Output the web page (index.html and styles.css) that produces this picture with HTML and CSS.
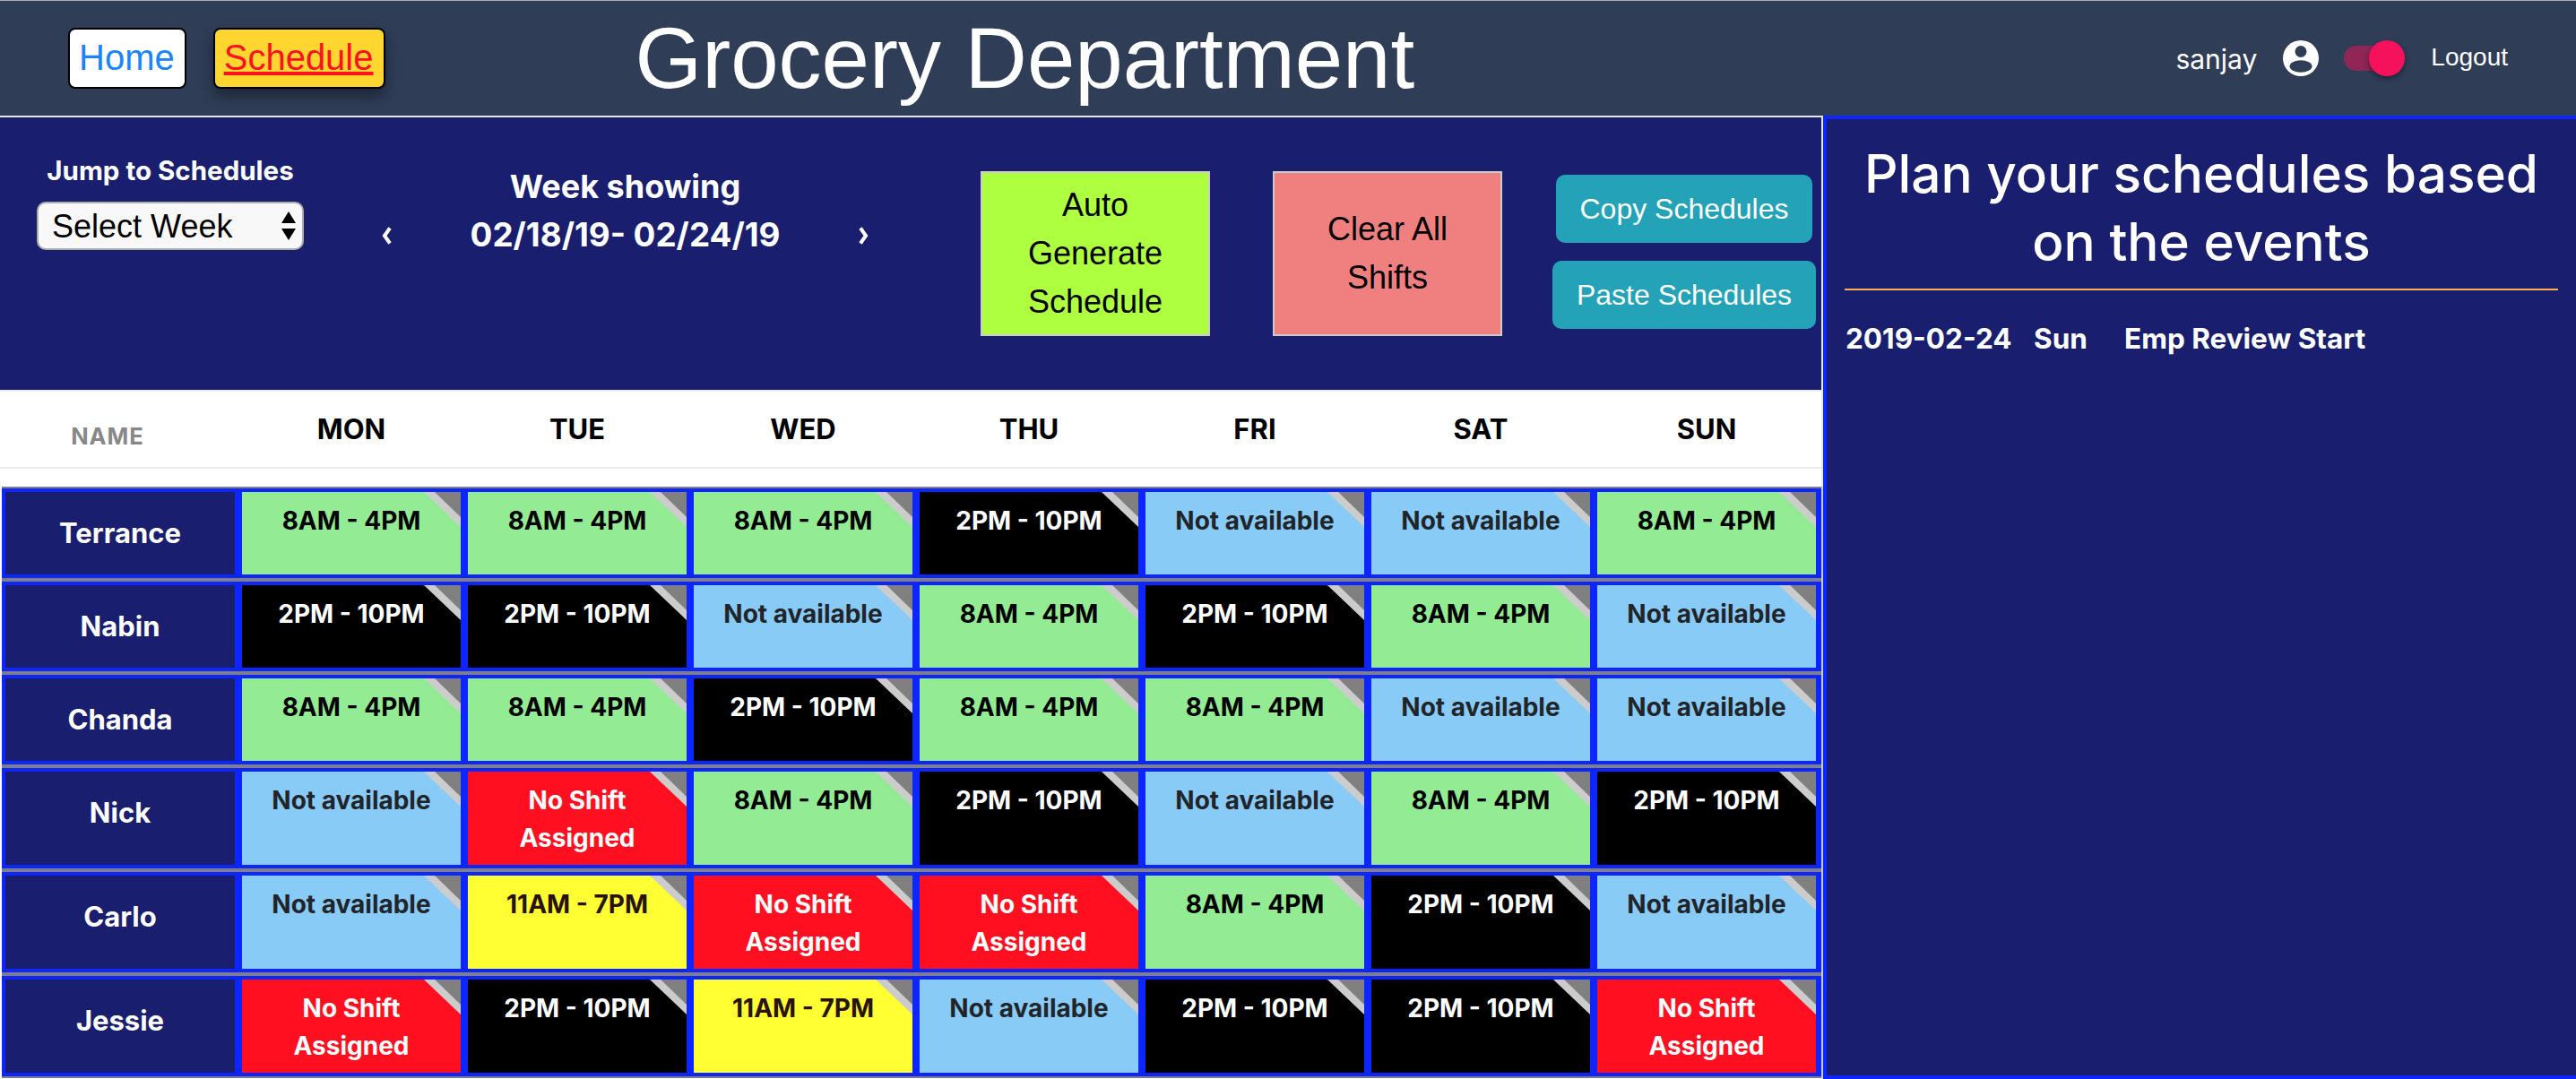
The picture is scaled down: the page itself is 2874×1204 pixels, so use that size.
FILE: index.html
```html
<!DOCTYPE html>
<html lang="en">
<head>
<meta charset="utf-8">
<title>Grocery Department</title>
<link rel="stylesheet" href="styles.css">
</head>
<body>
<header class="topbar">
  <nav class="nav">
    <a class="nav-btn nav-home">Home</a>
    <a class="nav-btn nav-active">Schedule</a>
  </nav>
  <h1 class="title">Grocery Department</h1>
  <div class="user">
    <span class="user-name">sanjay</span>
    <svg class="user-icon" viewBox="0 0 40 40"><circle cx="20" cy="20" r="20" fill="#fff"/><circle cx="20" cy="12.5" r="6.5" fill="#2f3d57"/><ellipse cx="20" cy="29" rx="12.5" ry="6.8" fill="#2f3d57"/></svg>
    <span class="switch"><span class="switch-track"></span><span class="switch-knob"></span></span>
    <span class="logout">Logout</span>
  </div>
</header>
<main class="main">
  <section class="schedule">
    <div class="toolbar">
      <div class="jump">
        <label class="jump-label" for="week">Jump to Schedules</label>
        <span class="select-wrap"><select id="week" class="select"><option>Select Week</option></select></span>
      </div>
      <div class="week">
        <div class="week-label">Week showing</div>
        <div class="week-range">
          <svg class="chev" viewBox="0 0 16 20"><path d="M11 1.500 5 10l6 8.500" fill="none" stroke="#fff" stroke-width="4"/></svg>
          <span>02/18/19- 02/24/19</span>
          <svg class="chev" viewBox="0 0 16 20"><path d="M5 1.500 11 10l-6 8.500" fill="none" stroke="#fff" stroke-width="4"/></svg>
        </div>
      </div>
      <button class="big-btn big-auto">Auto<br>Generate<br>Schedule</button>
      <button class="big-btn big-clear">Clear All<br>Shifts</button>
      <div class="actions">
        <button class="info-btn info-copy">Copy Schedules</button>
        <button class="info-btn info-paste">Paste Schedules</button>
      </div>
    </div>
    <div class="days">
      <div class="day-name">NAME</div>
      <div class="day">MON</div><div class="day">TUE</div><div class="day">WED</div><div class="day">THU</div><div class="day">FRI</div><div class="day">SAT</div><div class="day">SUN</div>
    </div>
    <div class="rows">
      <div class="row">
        <div class="name">Terrance</div>
        <div class="cell am">8AM - 4PM<i class="fold"></i></div>
        <div class="cell am">8AM - 4PM<i class="fold"></i></div>
        <div class="cell am">8AM - 4PM<i class="fold"></i></div>
        <div class="cell pm">2PM - 10PM<i class="fold"></i></div>
        <div class="cell na">Not available<i class="fold"></i></div>
        <div class="cell na">Not available<i class="fold"></i></div>
        <div class="cell am">8AM - 4PM<i class="fold"></i></div>
      </div>
      <div class="row">
        <div class="name">Nabin</div>
        <div class="cell pm">2PM - 10PM<i class="fold"></i></div>
        <div class="cell pm">2PM - 10PM<i class="fold"></i></div>
        <div class="cell na">Not available<i class="fold"></i></div>
        <div class="cell am">8AM - 4PM<i class="fold"></i></div>
        <div class="cell pm">2PM - 10PM<i class="fold"></i></div>
        <div class="cell am">8AM - 4PM<i class="fold"></i></div>
        <div class="cell na">Not available<i class="fold"></i></div>
      </div>
      <div class="row">
        <div class="name">Chanda</div>
        <div class="cell am">8AM - 4PM<i class="fold"></i></div>
        <div class="cell am">8AM - 4PM<i class="fold"></i></div>
        <div class="cell pm">2PM - 10PM<i class="fold"></i></div>
        <div class="cell am">8AM - 4PM<i class="fold"></i></div>
        <div class="cell am">8AM - 4PM<i class="fold"></i></div>
        <div class="cell na">Not available<i class="fold"></i></div>
        <div class="cell na">Not available<i class="fold"></i></div>
      </div>
      <div class="row">
        <div class="name">Nick</div>
        <div class="cell na">Not available<i class="fold"></i></div>
        <div class="cell none">No Shift<br>Assigned<i class="fold"></i></div>
        <div class="cell am">8AM - 4PM<i class="fold"></i></div>
        <div class="cell pm">2PM - 10PM<i class="fold"></i></div>
        <div class="cell na">Not available<i class="fold"></i></div>
        <div class="cell am">8AM - 4PM<i class="fold"></i></div>
        <div class="cell pm">2PM - 10PM<i class="fold"></i></div>
      </div>
      <div class="row">
        <div class="name">Carlo</div>
        <div class="cell na">Not available<i class="fold"></i></div>
        <div class="cell mid">11AM - 7PM<i class="fold"></i></div>
        <div class="cell none">No Shift<br>Assigned<i class="fold"></i></div>
        <div class="cell none">No Shift<br>Assigned<i class="fold"></i></div>
        <div class="cell am">8AM - 4PM<i class="fold"></i></div>
        <div class="cell pm">2PM - 10PM<i class="fold"></i></div>
        <div class="cell na">Not available<i class="fold"></i></div>
      </div>
      <div class="row">
        <div class="name">Jessie</div>
        <div class="cell none">No Shift<br>Assigned<i class="fold"></i></div>
        <div class="cell pm">2PM - 10PM<i class="fold"></i></div>
        <div class="cell mid">11AM - 7PM<i class="fold"></i></div>
        <div class="cell na">Not available<i class="fold"></i></div>
        <div class="cell pm">2PM - 10PM<i class="fold"></i></div>
        <div class="cell pm">2PM - 10PM<i class="fold"></i></div>
        <div class="cell none">No Shift<br>Assigned<i class="fold"></i></div>
      </div>
    </div>
  </section>
  <aside class="events">
    <h2 class="events-title">Plan your schedules based on the events</h2>
    <hr class="events-rule">
    <div class="event">
      <span class="event-date">2019-02-24</span>
      <span class="event-day">Sun</span>
      <span class="event-name">Emp Review Start</span>
    </div>
  </aside>
</main>
</body>
</html>
```
FILE: styles.css
```css
* { box-sizing: border-box; }
html, body { margin: 0; padding: 0; height: 1204px; overflow: hidden; background: #fff; }
body { font-family: "Inter", "Liberation Sans", sans-serif; color: #fff; }

.topbar {
  height: 129px;
  border-top: 1px solid #b0b0b0;
  background: #2f3d57;
  display: flex;
  align-items: flex-start;
  padding: 30px 76px 0;
}
.nav { display: flex; gap: 30px; }
.nav-btn {
  display: flex;
  align-items: center;
  height: 68px;
  padding: 0 11px 3px 10px;
  border: 2px solid #000;
  border-radius: 8px;
  font: 40px/1 "Liberation Sans", sans-serif;
}
.nav-home { background: #fff; color: #1a84ff; }
.nav-active {
  background: #ffd530;
  color: #ff1020;
  text-decoration: underline;
  box-shadow: 0 8px 16px rgba(0, 0, 0, .4);
}
.title {
  margin: -21px 0 0 279px;
  font: 400 96px/110px "Liberation Sans", sans-serif;
  white-space: nowrap;
}
.user { margin-left: auto; display: flex; align-items: center; height: 68px; margin-top: -1px; }
.user-name { font-size: 30px; line-height: 40px; margin-top: 4px; }
.user-icon { width: 40px; height: 40px; margin-left: 29px; margin-top: 2px; }
.switch { position: relative; width: 68px; height: 40px; margin-left: 28px; margin-top: 2px; }
.switch-track {
  position: absolute; left: 0; top: 6px; width: 56px; height: 28px;
  border-radius: 14px; background: #8f2655;
}
.switch-knob {
  position: absolute; right: 0; top: 0; width: 40px; height: 40px;
  border-radius: 50%; background: #f5115c;
  box-shadow: 0 3px 6px rgba(0, 0, 0, .4);
}
.logout { font: 28px/40px "Liberation Sans", sans-serif; margin-left: 29px; }

.main { display: flex; height: 1075px; }
.schedule {
  width: 2034px;
  flex: none;
  border-top: 2px solid #e6e6e6;
  border-right: 2px solid #e6e6e6;
  background: #fff;
}
.toolbar {
  height: 304px;
  background: #191e6e;
  display: flex;
  align-items: flex-start;
  padding-left: 41px;
}
.jump { width: 298px; margin-top: 42px; display: flex; flex-direction: column; align-items: center; }
.jump-label { font-size: 29.500px; line-height: 34px; font-weight: 700; margin-bottom: 18px; white-space: nowrap; }
.select-wrap { position: relative; display: block; width: 298px; height: 54px; }
.select-wrap::before, .select-wrap::after {
  content: "";
  position: absolute;
  right: 9px;
  border-left: 8.500px solid transparent;
  border-right: 8.500px solid transparent;
}
.select-wrap::before { top: 11px; border-bottom: 13px solid #000; }
.select-wrap::after { top: 30px; border-top: 13px solid #000; }
.select {
  appearance: none;
  width: 100%;
  height: 100%;
  padding: 0 0 0 15px;
  border: 2px solid #adadad;
  border-radius: 10px;
  background: #f8f8f8;
  color: #000;
  font: 36px "Liberation Sans", sans-serif;
}
.week { width: 547px; margin: 50px 0 0 85px; text-align: center; font-weight: 700; }
.week-label { font-size: 36px; line-height: 54px; }
.week-range { display: flex; justify-content: space-between; align-items: center; font-size: 36.800px; line-height: 54px; }
.chev { width: 16px; height: 20px; flex: none; margin-top: 2px; }
.big-btn {
  width: 256px;
  height: 184px;
  flex: none;
  margin-top: 60px;
  padding: 0;
  border: 2px solid #ccc;
  color: #000;
  font: 36px/54px "Liberation Sans", sans-serif;
}
.big-auto { margin-left: 123px; background: #adff40; }
.big-clear { margin-left: 70px; background: #f08080; }
.actions { width: 294px; margin: 64px 0 0 56px; display: flex; flex-direction: column; align-items: center; gap: 20px; }
.info-btn {
  height: 76px;
  border: 0;
  border-radius: 10px;
  background: #24a3b8;
  color: #fff;
  font: 32px "Liberation Sans", sans-serif;
}
.info-copy { width: 286px; }
.info-paste { width: 294px; }

.days {
  height: 88px;
  border-top: 2px solid #ededed;
  border-bottom: 2px solid #ededed;
  display: grid;
  grid-template-columns: 256px repeat(7, 244px);
  column-gap: 8px;
  padding-left: 6px;
  align-items: center;
  color: #000;
  text-align: center;
}
.day { font-size: 31px; font-weight: 700; padding-bottom: 2px; }
.day-name { font-size: 25.500px; font-weight: 700; letter-spacing: 1px; color: #888; padding: 14px 28px 0 0; }

.rows { margin-top: 20px; padding: 0 0 0 2px; }
.row {
  display: grid;
  grid-template-columns: 256px repeat(7, 244px);
  column-gap: 8px;
  padding: 4px;
  background: #0d26ff;
  border-top: 2px solid #808080;
  border-bottom: 2px solid #808080;
  box-shadow: 2px 0 0 #c8c8c8;
}
.name {
  background: #191e6e;
  padding-top: 23px;
  font-size: 31px;
  line-height: 45px;
  font-weight: 700;
  text-align: center;
}
.cell {
  position: relative;
  min-height: 92px;
  padding: 11px 0 9px;
  font-size: 28px;
  line-height: 42px;
  font-weight: 700;
  text-align: center;
}
.am { background: #93ec93; color: #000; }
.pm { background: #000; color: #fff; }
.na { background: #89cbf7; color: #212529; }
.none { background: #ff0f1f; color: #fff; }
.mid { background: #ffff33; color: #2a1208; }
.fold {
  position: absolute;
  top: 0;
  right: 0;
  width: 41px;
  height: 39px;
  background: #ccc;
  clip-path: polygon(0 0, 100% 0, 100% 100%);
}
.fold::after {
  content: "";
  position: absolute;
  top: 0;
  right: 0;
  width: 29px;
  height: 28px;
  background: #808080;
  clip-path: polygon(0 0, 100% 0, 100% 100%);
}

.events {
  flex: 1;
  border-top: 4px solid #0d26ff;
  border-left: 4px solid #0d26ff;
  border-bottom: 4px solid #0d26ff;
  background: #191e6e;
  padding: 23px 20px 0;
  height: 1075px;
}
.events-title {
  margin: 0;
  font-size: 58.500px;
  line-height: 76px;
  font-weight: 500;
  text-align: center;
}
.events-rule { margin: 14px 0 0; border: 0; height: 2px; background: #fdb04a; }
.event { display: flex; margin-top: 32px; padding-left: 1px; font-size: 31.500px; line-height: 44px; font-weight: 700; }
.event-date { width: 210px; }
.event-day { width: 101px; }
```
